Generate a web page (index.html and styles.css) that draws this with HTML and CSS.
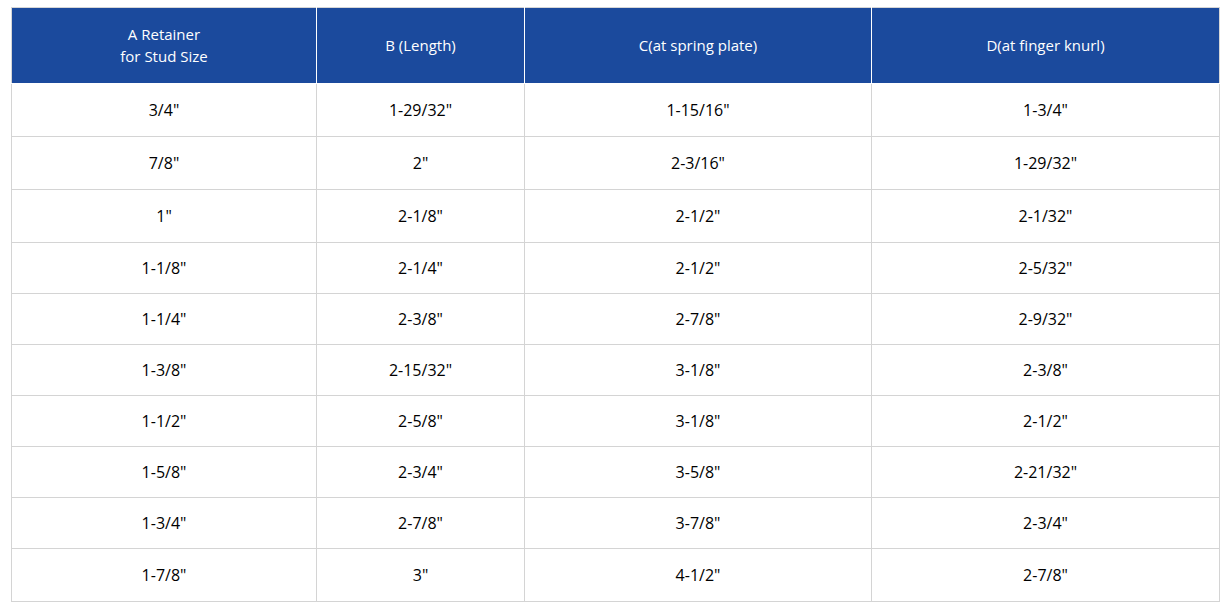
FILE: index.html
```html
<!DOCTYPE html>
<html>
<head>
<meta charset="utf-8">
<link rel="stylesheet" href="styles.css">
</head>
<body>
<table class="spec">
  <colgroup>
    <col class="c1"><col class="c2"><col class="c3"><col class="c4">
  </colgroup>
  <thead>
    <tr class="head">
      <th>A Retainer<br>for Stud Size</th>
      <th>B (Length)</th>
      <th>C(at spring plate)</th>
      <th>D(at finger knurl)</th>
    </tr>
  </thead>
  <tbody>
    <tr class="r53"><td>3/4"</td><td>1-29/32"</td><td>1-15/16"</td><td>1-3/4"</td></tr>
    <tr class="r53"><td>7/8"</td><td>2"</td><td>2-3/16"</td><td>1-29/32"</td></tr>
    <tr class="r53"><td>1"</td><td>2-1/8"</td><td>2-1/2"</td><td>2-1/32"</td></tr>
    <tr class="r51"><td>1-1/8"</td><td>2-1/4"</td><td>2-1/2"</td><td>2-5/32"</td></tr>
    <tr class="r51"><td>1-1/4"</td><td>2-3/8"</td><td>2-7/8"</td><td>2-9/32"</td></tr>
    <tr class="r51"><td>1-3/8"</td><td>2-15/32"</td><td>3-1/8"</td><td>2-3/8"</td></tr>
    <tr class="r51"><td>1-1/2"</td><td>2-5/8"</td><td>3-1/8"</td><td>2-1/2"</td></tr>
    <tr class="r51"><td>1-5/8"</td><td>2-3/4"</td><td>3-5/8"</td><td>2-21/32"</td></tr>
    <tr class="r51"><td>1-3/4"</td><td>2-7/8"</td><td>3-7/8"</td><td>2-3/4"</td></tr>
    <tr class="r52"><td>1-7/8"</td><td>3"</td><td>4-1/2"</td><td>2-7/8"</td></tr>
  </tbody>
</table>
</body>
</html>
```
FILE: styles.css
```css
html, body {
  margin: 0;
  padding: 0;
  background: #ffffff;
}
body {
  padding: 7px 0 0 11px;
  font-family: "Open Sans", "Noto Sans", sans-serif;
}
.spec {
  border-collapse: collapse;
  table-layout: fixed;
  width: 1208px;
  font-size: 16px;
  color: #000000;
}
.c1 { width: 305px; }
.c2 { width: 208px; }
.c3 { width: 347px; }
.c4 { width: 348px; }
.spec th, .spec td {
  text-align: center;
  vertical-align: middle;
  padding: 0;
}
.spec th {
  background: #1b4a9d;
  color: #ffffff;
  font-weight: 400;
  font-size: 15px;
  line-height: 22px;
  height: 76px;
  padding-bottom: 2px;
  box-sizing: border-box;
  border: 1px solid #ffffff;
  border-top: 1px solid #d6d6d6;
}
.spec th:first-child { border-left: 1px solid #d6d6d6; }
.spec th:last-child { border-right: 1px solid #d6d6d6; }
.spec td {
  border: 1px solid #d4d4d4;
}
.r53 td { height: 52px; }
.r51 td { height: 50px; }
.r52 td { height: 52px; }
```
